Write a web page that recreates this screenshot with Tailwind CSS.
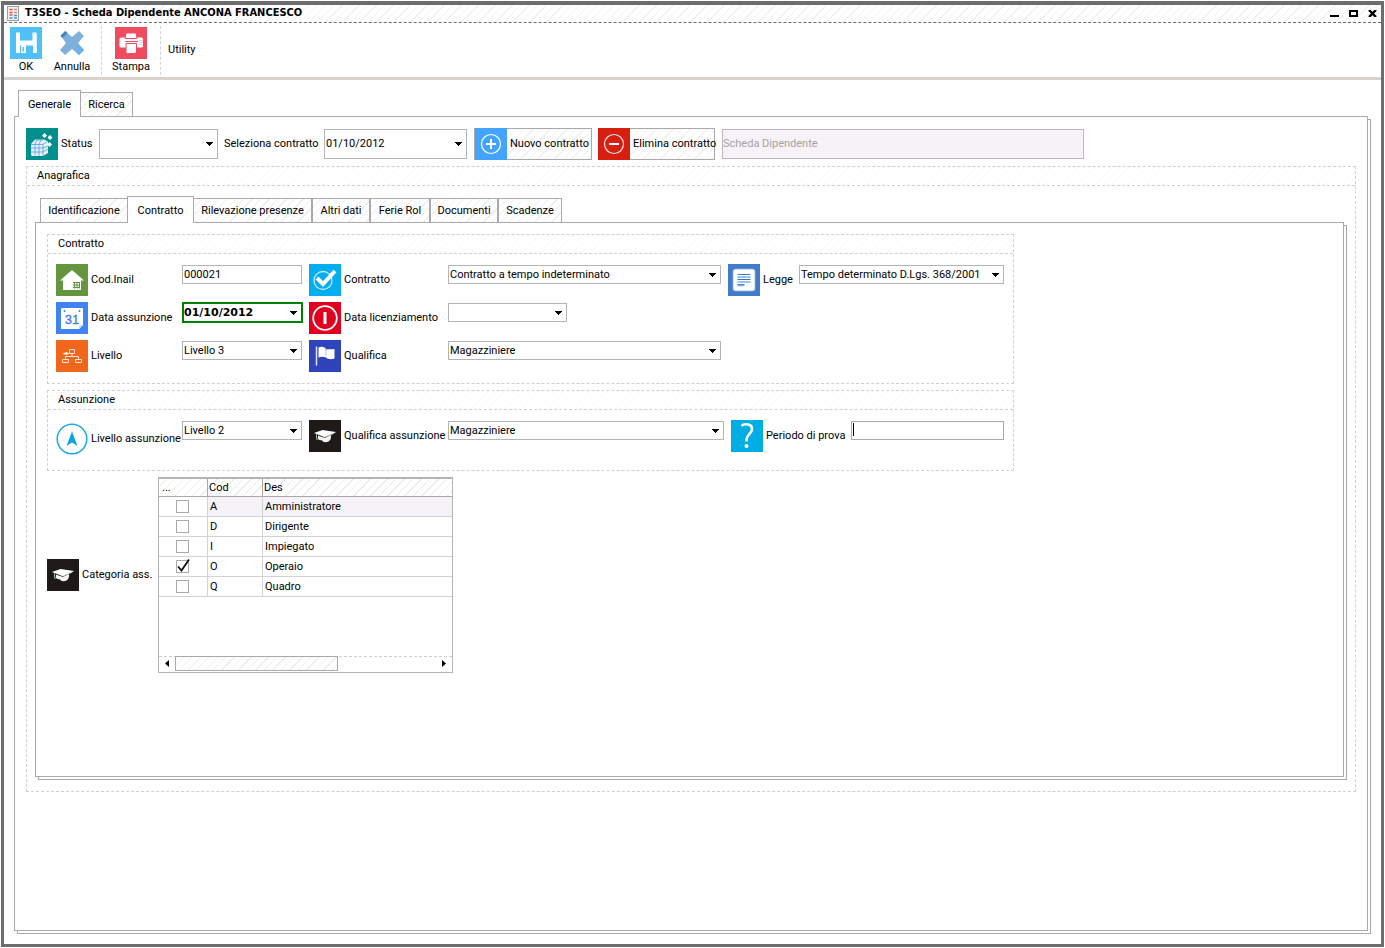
<!DOCTYPE html>
<html lang="it">
<head>
<meta charset="utf-8">
<title>T3SEO - Scheda Dipendente</title>
<script src="https://cdn.jsdelivr.net/npm/@tailwindcss/browser@4"></script>
</head>
<body class="flex min-h-screen bg-white p-px font-['Roboto','DejaVu_Sans_Condensed',sans-serif] text-[11px] leading-4 text-black">

<svg class="hidden" aria-hidden="true">
  <symbol id="caret" viewBox="0 0 7 4"><path d="M0 0h7v1H6v1H5v1H4v1H3V3H2V2H1V1H0z"/></symbol>
  <symbol id="cap" viewBox="0 0 32 32">
    <rect width="32" height="32" fill="#1f1a17"/>
    <path d="M5 13 13.500 10l13.500 2-6 4-5 1.500z" fill="#fff"/>
    <path d="M9 15.500l7 2.200 6-2.500c.5 4-1.500 7-5.500 7-2 0-3-1-3.500-2-2 0-3.500-.5-4-1.500z" fill="#f4f4f4"/>
    <path d="M8.500 15l7 2.500 8-3.500" stroke="#1f1a17" stroke-width=".4" fill="none"/>
    <path d="M7.500 14.500v4" stroke="#b9c7b9" stroke-width="1" fill="none"/>
    <rect x="7" y="18" width="2" height="2" fill="#4f8a4f"/>
  </symbol>
</svg>

<div class="flex flex-1 flex-col border-[3px] border-t-4 border-[#6b6e6b]">

  <header class="flex h-[18px] items-center border-b border-dashed border-[#6b6e6b] bg-[repeating-linear-gradient(135deg,#fff_0_5px,#f1f1f1_5px_6px)] pb-px pl-[3px] pr-1">
    <svg class="mr-[6px] h-[15px] w-3" viewBox="0 0 12 15" aria-hidden="true">
      <rect x=".5" y=".5" width="11" height="14" fill="#eef0f0" stroke="#9aa0a0"/>
      <path d="M2.500 3.500h3M2.500 6.500h3M2.500 9h3" stroke="#e0553f" stroke-width="1.500"/>
      <path d="M7 3.500h3M7 6.500h3" stroke="#e58a78" stroke-width="1.300"/>
      <path d="M2.500 12h3M7 12h3M7 9.500h3" stroke="#4a8fd0" stroke-width="1.300"/>
    </svg>
    <h1 class="flex-1 whitespace-nowrap font-['DejaVu_Sans_Condensed','DejaVu_Sans',sans-serif] font-bold">T3SEO - Scheda Dipendente ANCONA FRANCESCO</h1>
    <div class="flex gap-[10px]">
      <button type="button" aria-label="Riduci a icona"><svg class="h-[7px] w-[9px]" viewBox="0 0 9 7"><path d="M0 5h9v2H0z"/></svg></button>
      <button type="button" aria-label="Ingrandisci"><svg class="h-[7px] w-[9px]" viewBox="0 0 9 7"><path d="M1 1h7v5H1z" fill="#fff" stroke="#000" stroke-width="2"/></svg></button>
      <button type="button" aria-label="Chiudi"><svg class="h-[7px] w-[9px]" viewBox="0 0 9 7"><path d="M1 0l7 7M8 0L1 7" stroke="#000" stroke-width="2.400"/></svg></button>
    </div>
  </header>

  <nav class="flex h-[57px] items-start border-b-[3px] border-[#d5d2cf] pl-px pt-[3px]" aria-label="Comandi">
    <button type="button" class="ml-[5px] mt-px flex w-8 flex-col items-center">
      <svg class="size-8" viewBox="0 0 32 32" aria-hidden="true">
        <rect width="32" height="32" fill="#4fc0f8"/>
        <path d="M6 5.500h4v8h12.500v-8H26l.8 1v19.500H6z" fill="#fff"/>
        <path d="M16 18.500h7v8h-7z" fill="#4fc0f8"/><path d="M10 18.500h1v8h-1zM12.500 20H14v4.500h-1.500z" fill="#4fc0f8"/>
        <path d="M22.500 6h2v2.500h-2z" fill="#cfeefe"/>
      </svg>OK
    </button>
    <button type="button" class="ml-2 mt-px flex w-11 flex-col items-center">
      <svg class="size-8" viewBox="0 0 32 32" aria-hidden="true">
        <path d="M4.500 8.500 9 4l7 6 7-6 5 5-6 7 6 7-5 5-7-6-7 6-5-5 6-7z" fill="#80b1dc"/>
        <path d="M4.500 9 9.500 4l2 2-5 5z" fill="#3b86b6"/>
        <path d="M21 16.500l7 6.500-5 5-2-2z" fill="#68b0ee"/>
      </svg>Annulla
    </button>
    <div class="ml-[7px] h-[49px] border-l border-dashed border-[#d3d3d3]"></div>
    <button type="button" class="ml-[6px] mt-px flex w-[46px] flex-col items-center">
      <svg class="size-8" viewBox="0 0 32 32" aria-hidden="true">
        <rect width="32" height="32" fill="#f04c60"/>
        <rect x="4.500" y="10.500" width="23.500" height="10" rx="1.500" fill="#fff"/>
        <path d="M10 11.500l1-5.500h10l1 5.500z" fill="#fff" stroke="#f04c60"/>
        <path d="M10 14.500h13" stroke="#f04c60"/>
        <path d="M11 16.500h10.500V25l-1.500 1.500h-9z" fill="#fff" stroke="#f04c60"/>
        <path d="M25 13v5M27 13v5" stroke="#f7a3ae" stroke-dasharray="1 1"/>
      </svg>Stampa
    </button>
    <div class="ml-[6px] h-[49px] border-l border-dashed border-[#d3d3d3]"></div>
    <button type="button" class="ml-[7px] mt-4">Utility</button>
  </nav>

  <main class="flex flex-1 flex-col pb-[13px] pl-[10px] pr-[13px] pt-[10px]">
    <div class="z-10 -mb-px flex items-end pl-1" role="tablist">
      <button type="button" role="tab" aria-selected="true" class="h-[27px] w-[63px] border border-b-0 border-[#a9a9a9] bg-white pt-[2px]">Generale</button>
      <button type="button" role="tab" aria-selected="false" class="-ml-px h-[25px] w-[53px] border border-[#a9a9a9] bg-[repeating-linear-gradient(135deg,#fff_0_5px,#ececec_5px_6px)] pt-px">Ricerca</button>
    </div>

    <section class="flex flex-1 flex-col border border-[#a9a9a9] bg-white pl-[11px] pr-[11px] pt-[11px] shadow-[3px_3px_0_-1px_#fff,3px_3px_0_0_#a9a9a9]">

      <div class="flex items-center whitespace-nowrap">
        <svg class="size-8 shrink-0" viewBox="0 0 32 32" aria-hidden="true">
          <rect width="32" height="32" fill="#008f8c"/>
          <path d="M5 16l4-4.500h9l4 2V25l-5 3H6l-1-1z" fill="#e9f2fb"/>
          <path d="M5 16.500h11.500l5-3M5 20h12l5-2M5 24h12l5-3M9 16v11M13 16v12M17 16v12M9 11.500l3 .5h5M11 12l-2 4M15 12l-2 4" stroke="#5fa6dc" stroke-width=".9" fill="none"/>
          <path d="M18.500 5l2.500 2.500-2.500 2.500L16 7.500zM24 7l2.500 2.500L24 12l-2.500-2.500zM23.500 14l2.500 2.500-2.500 2.500-2.500-2.500z" fill="#fff"/>
        </svg>
        <label for="status" class="w-[41px] pl-[3px]">Status</label>
        <span class="relative flex"><select id="status" class="h-[30px] w-[119px] appearance-none border border-[#b4b4b4] bg-white pl-px"><option></option></select><svg class="pointer-events-none absolute right-[5px] top-[13px] h-1 w-[7px]"><use href="#caret"/></svg></span>
        <label for="selcon" class="w-[106px] pl-[6px]">Seleziona contratto</label>
        <span class="relative flex"><select id="selcon" class="h-[30px] w-[143px] appearance-none border border-[#b4b4b4] bg-white pl-px"><option>01/10/2012</option></select><svg class="pointer-events-none absolute right-[5px] top-[13px] h-1 w-[7px]"><use href="#caret"/></svg></span>
        <button type="button" class="ml-[7px] flex h-8 w-[118px] items-center border border-[#a9a9a9] bg-[repeating-linear-gradient(135deg,#fff_0_5px,#f0f0f0_5px_6px)]">
          <svg class="-my-px h-8 w-8 shrink-0" viewBox="0 0 32 32" aria-hidden="true"><rect width="32" height="32" fill="#44a4fc"/><circle cx="16" cy="16" r="9.500" fill="none" stroke="#fff" stroke-width="1.200"/><path d="M16 11v10M11 16h10" stroke="#fff" stroke-width="2"/></svg>
          <span class="pl-[3px]">Nuovo contratto</span>
        </button>
        <button type="button" class="ml-[6px] flex h-8 w-[117px] items-center border border-l-0 border-[#a9a9a9] bg-[repeating-linear-gradient(135deg,#fff_0_5px,#f0f0f0_5px_6px)]">
          <svg class="-my-px h-8 w-8 shrink-0" viewBox="0 0 32 32" aria-hidden="true"><rect width="32" height="32" fill="#d61f10"/><circle cx="16" cy="16" r="9.500" fill="none" stroke="#fbe3e0" stroke-width="1.200"/><path d="M11 16h10" stroke="#fff" stroke-width="2"/></svg>
          <span class="pl-[3px]">Elimina contratto</span>
        </button>
        <input type="text" disabled value="Scheda Dipendente" aria-label="Descrizione" class="ml-[7px] h-[30px] w-[362px] border border-[#b9b9b9] bg-[#f7f2f7] pb-[2px] text-[#a3a3a3]">
      </div>

      <section class="mt-[6px] border border-dashed border-[#d0d0d0]">
        <h2 class="h-[19px] border-b border-dashed border-[#d0d0d0] bg-[repeating-linear-gradient(135deg,#fff_0_5px,#fbfbfb_5px_6px)] pl-[10px] pt-px">Anagrafica</h2>
        <div class="pb-[14px] pl-2 pr-[11px] pt-[10px]">
          <div class="relative z-10 -mb-px flex items-end whitespace-nowrap pl-[5px]" role="tablist">
            <button type="button" role="tab" aria-selected="false" class="h-[25px] w-[88px] border border-[#a9a9a9] bg-[repeating-linear-gradient(135deg,#fff_0_5px,#ececec_5px_6px)] pt-px">Identificazione</button>
            <button type="button" role="tab" aria-selected="true" class="-ml-px h-[27px] w-[67px] border border-b-0 border-[#a9a9a9] bg-white pt-[2px]">Contratto</button>
            <button type="button" role="tab" aria-selected="false" class="-ml-px h-[25px] w-[119px] border border-[#a9a9a9] bg-[repeating-linear-gradient(135deg,#fff_0_5px,#ececec_5px_6px)] pt-px">Rilevazione presenze</button>
            <button type="button" role="tab" aria-selected="false" class="h-[25px] w-[58px] border border-[#a9a9a9] bg-[repeating-linear-gradient(135deg,#fff_0_5px,#ececec_5px_6px)] pt-px">Altri dati</button>
            <button type="button" role="tab" aria-selected="false" class="h-[25px] w-[60px] border border-[#a9a9a9] bg-[repeating-linear-gradient(135deg,#fff_0_5px,#ececec_5px_6px)] pt-px">Ferie Rol</button>
            <button type="button" role="tab" aria-selected="false" class="h-[25px] w-[68px] border border-[#a9a9a9] bg-[repeating-linear-gradient(135deg,#fff_0_5px,#ececec_5px_6px)] pt-px">Documenti</button>
            <button type="button" role="tab" aria-selected="false" class="h-[25px] w-[64px] border border-[#a9a9a9] bg-[repeating-linear-gradient(135deg,#fff_0_5px,#ececec_5px_6px)] pt-px">Scadenze</button>
          </div>

          <div class="min-h-[555px] border border-[#a9a9a9] bg-white pl-[11px] pt-[11px] shadow-[3px_3px_0_-1px_#fff,3px_3px_0_0_#a9a9a9]">

            <section class="w-[967px] border border-dashed border-[#d0d0d0]">
              <h3 class="h-[19px] border-b border-dashed border-[#d0d0d0] bg-[repeating-linear-gradient(135deg,#fff_0_5px,#fbfbfb_5px_6px)] pl-[10px] pt-px">Contratto</h3>
              <div class="grid grid-cols-[126px_127px_139px_280px_71px_205px] gap-y-[6px] whitespace-nowrap px-2 pb-[11px] pt-[10px]">
                <label for="inail" class="flex items-center gap-[3px]">
                  <svg class="size-8 shrink-0" viewBox="0 0 32 32" aria-hidden="true"><rect width="32" height="32" fill="#65953f"/><path d="M16 6l12 10.500h-3V26H7v-9.500H4z" fill="#fff"/><path d="M17 18.500h7M17 21h7M17 23.500h7M18.500 18v6.500M21 18v6.500M23.500 18v6.500" stroke="#65953f"/></svg>
                  Cod.Inail</label>
                <input id="inail" type="text" value="000021" class="mt-px h-[19px] w-[120px] border border-[#b4b4b4] pl-px">
                <label for="contratto" class="flex items-center gap-[3px]">
                  <svg class="size-8 shrink-0" viewBox="0 0 32 32" aria-hidden="true"><rect width="32" height="32" fill="#02adf0"/><circle cx="14" cy="16.500" r="9" fill="none" stroke="#c8ecfc" stroke-width="1.300"/><path d="M8 14l6 6L26 7" fill="none" stroke="#fff" stroke-width="4"/></svg>
                  Contratto</label>
                <span class="relative"><select id="contratto" class="mt-px block h-[19px] w-[273px] appearance-none border border-[#b4b4b4] bg-white pl-px"><option>Contratto a tempo indeterminato</option></select><svg class="pointer-events-none absolute right-3 top-[9px] h-1 w-[7px]"><use href="#caret"/></svg></span>
                <label for="legge" class="flex items-center gap-[3px]">
                  <svg class="size-8 shrink-0" viewBox="0 0 32 32" aria-hidden="true"><rect width="32" height="32" fill="#447bc8"/><rect x="5" y="5" width="22" height="22" rx="2.500" fill="#fff" stroke="#8fb8e6" stroke-width=".8"/><path d="M9.500 10.500h13M9.500 15.500h13M9.500 20.500h7" stroke="#3f78c6" stroke-width="1.200"/><path d="M9.500 13h13M9.500 18h13M9.500 21.500h7" stroke="#7fb0e2" stroke-width="1.400"/></svg>
                  Legge</label>
                <span class="relative"><select id="legge" class="mt-px block h-[19px] w-[205px] appearance-none border border-[#b4b4b4] bg-white pl-px"><option>Tempo determinato D.Lgs. 368/2001</option></select><svg class="pointer-events-none absolute right-[5px] top-[9px] h-1 w-[7px]"><use href="#caret"/></svg></span>

                <label for="assunto" class="flex items-center gap-[3px]">
                  <svg class="size-8 shrink-0" viewBox="0 0 32 32" aria-hidden="true"><rect width="32" height="32" fill="#4084f3"/><path d="M6 6h21v17l-4 4H5V7z" fill="#fff"/><path d="M27 23l-4 4v-4z" fill="#c9dcfb"/><path d="M8.500 8v2M23.500 8v2" stroke="#4084f3" stroke-width="1.500"/><text x="16" y="22" text-anchor="middle" font-family="Liberation Sans" font-size="13" fill="#3d7de6" stroke="#3d7de6" stroke-width=".3">31</text></svg>
                  Data assunzione</label>
                <span class="relative"><select id="assunto" class="block h-[21px] w-[121px] appearance-none border-2 border-[#008000] bg-white font-['DejaVu_Sans',sans-serif] font-bold"><option>01/10/2012</option></select><svg class="pointer-events-none absolute right-3 top-[9px] h-1 w-[7px]"><use href="#caret"/></svg></span>
                <label for="licenz" class="flex items-center gap-[3px]">
                  <svg class="size-8 shrink-0" viewBox="0 0 32 32" aria-hidden="true"><rect width="32" height="32" fill="#e00020"/><circle cx="16" cy="16" r="11.800" fill="none" stroke="#fff" stroke-width="1.800"/><path d="M16 10v12" stroke="#fff" stroke-width="3"/></svg>
                  Data licenziamento</label>
                <span class="relative col-span-3"><select id="licenz" class="mt-px block h-[19px] w-[119px] appearance-none border border-[#b4b4b4] bg-white pl-px"><option></option></select><svg class="pointer-events-none absolute left-[107px] top-[9px] h-1 w-[7px]"><use href="#caret"/></svg></span>

                <label for="livello" class="flex items-center gap-[3px]">
                  <svg class="size-8 shrink-0" viewBox="0 0 32 32" aria-hidden="true"><rect width="32" height="32" fill="#f0661a"/><g fill="none" stroke="#fbe3d3" stroke-width="1"><path d="M13.500 9.500h5v4h-5z"/><path d="M6.500 19.500h6v3h-6zM19.500 19.500h6v3h-6z"/><path d="M16 13.500v3M9.500 19.500v-3h13v3"/></g><path d="M7.500 13.500h5M10.500 12v3" stroke="#fff" stroke-width="1.300"/></svg>
                  Livello</label>
                <span class="relative"><select id="livello" class="mt-px block h-[19px] w-[120px] appearance-none border border-[#b4b4b4] bg-white pl-px"><option>Livello 3</option></select><svg class="pointer-events-none absolute right-3 top-[9px] h-1 w-[7px]"><use href="#caret"/></svg></span>
                <label for="qualifica" class="flex items-center gap-[3px]">
                  <svg class="size-8 shrink-0" viewBox="0 0 32 32" aria-hidden="true"><rect width="32" height="32" fill="#2f43ba"/><path d="M7.500 6.500v19" stroke="#dfe4fa" stroke-width="1.500"/><path d="M9.500 7.500c3-1.500 5-.5 7 .5v1.500c3-.5 6 0 9-.5v9.500c-4 1.500-7 .5-8.500-1-2-.8-4.500-1-7.500 0z" fill="#fff"/><path d="M17 9v7" stroke="#b6c0ec"/></svg>
                  Qualifica</label>
                <span class="relative"><select id="qualifica" class="mt-px block h-[19px] w-[273px] appearance-none border border-[#b4b4b4] bg-white pl-px"><option>Magazziniere</option></select><svg class="pointer-events-none absolute right-3 top-[9px] h-1 w-[7px]"><use href="#caret"/></svg></span>
              </div>
            </section>

            <section class="mt-[6px] w-[967px] border border-dashed border-[#d0d0d0]">
              <h3 class="h-[19px] border-b border-dashed border-[#d0d0d0] bg-[repeating-linear-gradient(135deg,#fff_0_5px,#fbfbfb_5px_6px)] pl-[10px] pt-px">Assunzione</h3>
              <div class="grid grid-cols-[126px_127px_139px_283px_120px_153px] items-start whitespace-nowrap px-2 pb-[15px] pt-[10px]">
                <label for="livass" class="flex items-center gap-[3px] pt-[3px]">
                  <svg class="size-8 shrink-0" viewBox="0 0 32 32" aria-hidden="true"><circle cx="16" cy="16" r="14.800" fill="#fff" stroke="#18abdf" stroke-width="1.500"/><path d="M16 8.500l5.500 14.500-5.500-3.500-5.500 3.500z" fill="#0aa6dc"/></svg>
                  Livello assunzione</label>
                <span class="relative"><select id="livass" class="mt-px block h-[19px] w-[120px] appearance-none border border-[#b4b4b4] bg-white pl-px"><option>Livello 2</option></select><svg class="pointer-events-none absolute right-3 top-[9px] h-1 w-[7px]"><use href="#caret"/></svg></span>
                <label for="qualass" class="flex items-center gap-[3px]"><svg class="size-8 shrink-0" aria-hidden="true"><use href="#cap"/></svg>Qualifica assunzione</label>
                <span class="relative"><select id="qualass" class="mt-px block h-[19px] w-[276px] appearance-none border border-[#b4b4b4] bg-white pl-px"><option>Magazziniere</option></select><svg class="pointer-events-none absolute right-3 top-[9px] h-1 w-[7px]"><use href="#caret"/></svg></span>
                <label for="prova" class="flex items-center gap-[3px]">
                  <svg class="size-8 shrink-0" viewBox="0 0 32 32" aria-hidden="true"><rect width="32" height="32" fill="#00aee3"/><path d="M10.500 6c2-2.300 10.500-3 10.500 3 0 5-5.500 5.500-5.500 10.500v2" fill="none" stroke="#fff" stroke-width="2.600"/><circle cx="15.500" cy="26" r="2" fill="#fff"/></svg>
                  Periodo di prova</label>
                <span class="relative"><input id="prova" type="text" class="mt-px block h-[19px] w-[153px] border border-[#a9a9a9]"><span class="pointer-events-none absolute left-[2px] top-[3px] h-[13px] w-px bg-black"></span></span>
              </div>
            </section>

            <section class="mt-[6px] flex items-center">
              <h3 id="cat" class="flex w-[111px] items-center gap-[3px] whitespace-nowrap"><svg class="size-8 shrink-0" aria-hidden="true"><use href="#cap"/></svg>Categoria ass.</h3>
              <div class="flex h-[196px] w-[295px] flex-col border border-t-2 border-[#b4b4b4]">
                <table class="w-full table-fixed border-separate border-spacing-0 leading-4" aria-labelledby="cat">
                  <thead>
                    <tr class="h-[18px] bg-[repeating-linear-gradient(135deg,#fff_0_5px,#ececec_5px_6px)] text-left">
                      <th class="w-[49px] border-b border-r border-[#a9a9a9] p-0 pl-[3px] font-normal">...</th>
                      <th class="w-[55px] border-b border-r border-[#a9a9a9] p-0 pl-px font-normal">Cod</th>
                      <th class="border-b border-[#a9a9a9] p-0 pl-px font-normal">Des</th>
                    </tr>
                  </thead>
                  <tbody>
                    <tr class="h-5 bg-[#f5f3f8]">
                      <td class="border-b border-r border-[#d3d3d3] bg-white p-0 pr-px"><input type="checkbox" aria-label="Amministratore" class="mx-auto block size-[13px] appearance-none border border-[#a9a9a9]"></td>
                      <td class="border-b border-r border-[#d3d3d3] p-0 pl-[2px]">A</td><td class="border-b border-[#d3d3d3] p-0 pl-[2px]">Amministratore</td>
                    </tr>
                    <tr class="h-5">
                      <td class="border-b border-r border-[#d3d3d3] p-0 pr-px"><input type="checkbox" aria-label="Dirigente" class="mx-auto block size-[13px] appearance-none border border-[#a9a9a9]"></td>
                      <td class="border-b border-r border-[#d3d3d3] p-0 pl-[2px]">D</td><td class="border-b border-[#d3d3d3] p-0 pl-[2px]">Dirigente</td>
                    </tr>
                    <tr class="h-5">
                      <td class="border-b border-r border-[#d3d3d3] p-0 pr-px"><input type="checkbox" aria-label="Impiegato" class="mx-auto block size-[13px] appearance-none border border-[#a9a9a9]"></td>
                      <td class="border-b border-r border-[#d3d3d3] p-0 pl-[2px]">I</td><td class="border-b border-[#d3d3d3] p-0 pl-[2px]">Impiegato</td>
                    </tr>
                    <tr class="h-5">
                      <td class="border-b border-r border-[#d3d3d3] p-0 pr-px"><span class="relative mx-auto block size-[13px]"><input type="checkbox" checked aria-label="Operaio" class="block size-[13px] appearance-none border border-[#a9a9a9]"><svg class="pointer-events-none absolute -top-px left-px h-[13px] w-[13px]" viewBox="0 0 13 13" fill="none"><path d="M1 7.500l3.500 4L12 .5" stroke="#111" stroke-width="1.800"/></svg></span></td>
                      <td class="border-b border-r border-[#d3d3d3] p-0 pl-[2px]">O</td><td class="border-b border-[#d3d3d3] p-0 pl-[2px]">Operaio</td>
                    </tr>
                    <tr class="h-5">
                      <td class="border-b border-r border-[#d3d3d3] p-0 pr-px"><input type="checkbox" aria-label="Quadro" class="mx-auto block size-[13px] appearance-none border border-[#a9a9a9]"></td>
                      <td class="border-b border-r border-[#d3d3d3] p-0 pl-[2px]">Q</td><td class="border-b border-[#d3d3d3] p-0 pl-[2px]">Quadro</td>
                    </tr>
                  </tbody>
                </table>
                <div class="mt-auto flex h-4 items-start border-t border-dashed border-[#d0d0d0]">
                  <button type="button" aria-label="Scorri a sinistra" class="flex h-[13px] w-4 items-center justify-center"><svg class="h-[7px] w-1" viewBox="0 0 4 7"><path d="M4 0v7L0 3.500z"/></svg></button>
                  <div class="-mt-px h-[15px] w-[163px] border border-[#a9a9a9] bg-[repeating-linear-gradient(135deg,#fff_0_5px,#ececec_5px_6px)]"></div>
                  <button type="button" aria-label="Scorri a destra" class="ml-auto flex h-[13px] w-4 items-center justify-center"><svg class="h-[7px] w-1" viewBox="0 0 4 7"><path d="M0 0v7l4-3.500z"/></svg></button>
                </div>
              </div>
            </section>

          </div>
        </div>
      </section>
    </section>
  </main>
</div>
</body>
</html>
